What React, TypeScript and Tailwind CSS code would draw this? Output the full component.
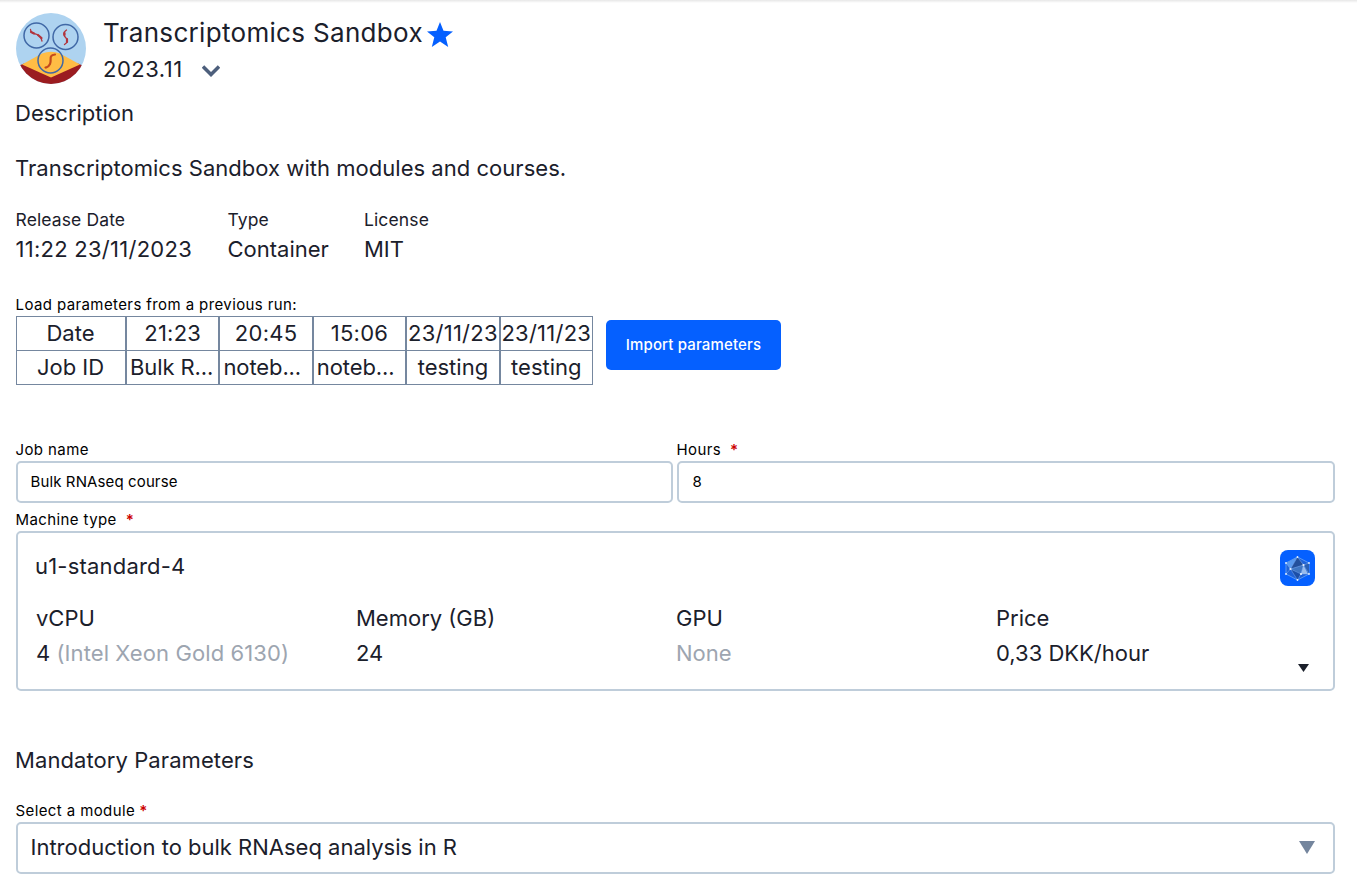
import React from "react";

const runs = [
  ["21:23", "Bulk R..."],
  ["20:45", "noteb..."],
  ["15:06", "noteb..."],
  ["23/11/23", "testing"],
  ["23/11/23", "testing"],
];

function Logo() {
  return (
    <svg viewBox="0 0 70 71" className="h-[71px] w-[70px] shrink-0" aria-hidden="true">
      <defs>
        <clipPath id="disc">
          <ellipse cx="35" cy="35.5" rx="35" ry="35.5" />
        </clipPath>
      </defs>
      <g clipPath="url(#disc)">
        <path d="M0 0H70V71H0Z" fill="#aed3f0" />
        <path d="M0 54L8 50.500L35 60L62 50.500L70 54V71H0Z" fill="#9b1c20" />
        <path d="M6 51.500L26 40.500Q35 37 44 40.500L64 51.500L35 64.500Z" fill="#ffbd45" />
      </g>
      <g fill="none" stroke="#4068a6" strokeWidth="1.500">
        <circle cx="20.500" cy="22.500" r="12.500" />
        <circle cx="49.500" cy="24" r="12.500" />
        <circle cx="34.500" cy="47.500" r="12.500" />
      </g>
      <g fill="none" stroke="#b2343d" strokeLinecap="round">
        <path d="M14.500 16.500C15 21 18 20 21 21.500S25 24 26 28" strokeWidth="1.300" />
        <path d="M15 19L18 20.500M22 22L25.500 25" strokeWidth="2.200" />
        <path d="M50.500 17C46 20 48 23 50 25S52 29 48.500 31.500" strokeWidth="1.300" />
        <path d="M48.500 20V22M51 26V29" strokeWidth="2.200" />
      </g>
      <path d="M39 41.500C32 42 36 47 34 51S31 54 29.500 54.500" fill="none" stroke="#c44a1c" strokeWidth="2.200" strokeLinecap="round" />
    </svg>
  );
}

function ProviderIcon() {
  return (
    <svg viewBox="0 0 35 36" className="h-9 w-[35px]" aria-hidden="true">
      <rect width="35" height="36" rx="8" fill="#0560ff" />
      <path d="M17.500 7L29 13V24L17.500 30L6 24V13Z" fill="#1f63d8" stroke="#6ba5f5" strokeWidth=".8" />
      <path d="M17.500 7L10.500 19L6 13Z" fill="#5a9bf0" />
      <path d="M17.500 7L23.500 15L10.500 19Z" fill="#23509c" />
      <path d="M10.500 19L23.500 15L21 24Z" fill="#3f76c2" />
      <path d="M10.500 19L21 24L17.500 30Z" fill="#1c4fa8" />
      <path d="M23.500 15L28 24L21 24Z" fill="#98bced" />
      <path d="M23.500 15L29 13V24Z" fill="#2a60b4" />
      <path d="M6 24L10.500 19L17.500 7L23.500 15L29 13M10.500 19L23.500 15L21 24L17.500 30L10.500 19L21 24L29 24L23.500 15M6 13L10.500 19" fill="none" stroke="#8ab5f2" strokeWidth=".45" />
      <g fill="#e8f2ff">
        <circle cx="17.500" cy="7" r=".9" />
        <circle cx="29" cy="13" r=".9" />
        <circle cx="29" cy="24" r=".9" />
        <circle cx="17.500" cy="30" r=".9" />
        <circle cx="6" cy="24" r=".9" />
        <circle cx="6" cy="13" r=".9" />
        <circle cx="10.500" cy="19" r="1.100" />
        <circle cx="23.500" cy="15" r="1.100" />
        <circle cx="21" cy="24" r="1.100" />
      </g>
    </svg>
  );
}

function Label({ children, required, gap }: { children: string; required?: boolean; gap?: boolean }) {
  return (
    <div className="-ml-px mb-px h-[21px] whitespace-pre pl-[0.5px] text-[15px] leading-[22px] tracking-[0.4px] text-black">
      {children}
      {required && <span className={gap ? "ml-[9px] font-semibold text-[#cc0000]" : "ml-[4px] font-semibold text-[#cc0000]"}>*</span>}
    </div>
  );
}

function Fact({ label, value, className }: { label: string; value: string; className: string }) {
  return (
    <div className={className}>
      <div className="h-7 text-[17.5px] leading-7 tracking-[0.12px]">{label}</div>
      <div className="h-[30px] text-[22px] leading-[30px]">{value}</div>
    </div>
  );
}

export default function App() {
  return (
    <main className="h-[889px] w-[1357px] overflow-hidden whitespace-nowrap bg-white pl-4 pr-[22px] font-['Inter',sans-serif] text-[22px] leading-[30px] text-[#1b202b]">
      <div className="-ml-4 -mr-[22px] h-[3px] bg-linear-to-b from-[#e7e7e7] to-white" />
      <header className="mt-[10px] flex h-[74px]">
        <Logo />
        <div className="ml-[17px] pt-[2px]">
          <div className="flex h-9 items-center text-[26px] leading-9">
            <h1 className="w-[320px] tracking-[0.32px]">Transcriptomics Sandbox</h1>
            <svg viewBox="0 0 26 25" className="ml-1 mt-[3px] h-[25px] w-[26px]" fill="#0560ff" aria-hidden="true">
              <path d="M13 0L16.500 8.800L26 9.400L18.700 15.300L21.200 25L13 19.600L4.800 25L7.300 15.300L0 9.400L9.500 8.800Z" />
            </svg>
          </div>
          <div className="flex h-9 items-center leading-9">
            <span className="w-[99px] tracking-[0.5px]">2023.11</span>
            <svg viewBox="0 0 18 12" className="mt-[3px] h-3 w-[18px]" fill="none" stroke="#4d5f7c" strokeWidth="3.500" aria-hidden="true">
              <path d="M1 1.500L9 9.500L17 1.500" />
            </svg>
          </div>
        </div>
      </header>
      <h2 className="-ml-px mt-[11px]">Description</h2>
      <p className="-ml-px mt-[25px] tracking-[0.03px]">Transcriptomics Sandbox with modules and courses.</p>
      <section className="-ml-[0.5px] mt-[23px] flex">
        <Fact className="w-[212px] tracking-[0.26px]" label="Release Date" value="11:22 23/11/2023" />
        <Fact className="w-[136.5px]" label="Type" value="Container" />
        <Fact className="w-[100px]" label="License" value="MIT" />
      </section>
      <section className="mt-[30px]">
        <Label>Load parameters from a previous run:</Label>
        <div className="flex">
          <div className="flex h-[69px] w-[577px] border-y border-[#75879f] text-center">
            <div className="w-[110px] border-x border-[#75879f]">
              <div className="-ml-px h-[34px] border-b border-[#75879f] leading-[33px]">Date</div>
              <div className="-ml-px leading-[33px]">Job ID</div>
            </div>
            {runs.map(([date, job], i) => (
              <div key={i} className="min-w-0 flex-1 border-r border-[#75879f]">
                <div className="h-[34px] border-b border-l border-[#75879f] leading-[33px]"><span className="-mx-1 tracking-[0.25px]">{date}</span></div>
                <div className={job.endsWith("...") ? "h-[33px] border-l border-[#75879f] pl-[3px] text-left leading-[33px] tracking-[-0.1px]" : "h-[33px] border-l border-[#75879f] leading-[33px]"}>{job}</div>
              </div>
            ))}
          </div>
          <button className="ml-[13px] mt-1 h-[50px] w-[175px] rounded-[5px] bg-[#0560ff] text-[15px] font-medium leading-5 tracking-[0.15px] text-white">Import parameters</button>
        </div>
      </section>
      <section className="mt-[54px] flex gap-1">
        <div className="w-[657px]">
          <Label>Job name</Label>
          <div className="h-[42px] rounded-[5px] border-2 border-[#bfcdda] pl-[12.5px] text-[15px] leading-[37px] tracking-[0.12px] text-black">Bulk RNAseq course</div>
        </div>
        <div className="w-[658px]">
          <Label required gap>Hours</Label>
          <div className="h-[42px] rounded-[5px] border-2 border-[#bfcdda] pl-[13.5px] text-[15px] leading-[37px] text-black">8</div>
        </div>
      </section>
      <section className="mt-[6px]">
        <Label required gap>Machine type</Label>
        <div className="relative h-[160px] rounded-[5px] border-2 border-[#bfcdda] px-[18px] pt-[17px]">
          <div className="flex h-9 justify-between">
            <span className="-ml-px leading-[33px] tracking-[0.2px]">u1-standard-4</span>
            <ProviderIcon />
          </div>
          <div className="mt-[15px] grid grid-cols-[320px_320px_320px_1fr] leading-[35px]">
            <div>vCPU<br />4 <span className="tracking-[0.1px] text-[#9da5b0]">(Intel Xeon Gold 6130)</span></div>
            <div>Memory (GB)<br />24</div>
            <div>GPU<br /><span className="text-[#9da5b0]">None</span></div>
            <div>Price<br />0,33 DKK/hour</div>
          </div>
          <svg viewBox="0 0 11 8" className="absolute bottom-[17px] right-[24px] h-2 w-[11px]" fill="#1b202b" aria-hidden="true">
            <path d="M0 0H11L5.500 8Z" />
          </svg>
        </div>
      </section>
      <h2 className="-ml-px mt-[54px] tracking-[0.08px]">Mandatory Parameters</h2>
      <section className="mt-[25px]">
        <Label required>Select a module</Label>
        <div className="flex h-[52px] items-center justify-between rounded-[5px] border-2 border-[#bfcdda] pl-[12.5px] pr-[18px]">
          <span className="-mt-[2px]">Introduction to bulk RNAseq analysis in R</span>
          <svg viewBox="0 0 16 13" className="-mt-px h-[13px] w-4" fill="#74859d" aria-hidden="true">
            <path d="M0 0H16L8 13Z" />
          </svg>
        </div>
      </section>
    </main>
  );
}
